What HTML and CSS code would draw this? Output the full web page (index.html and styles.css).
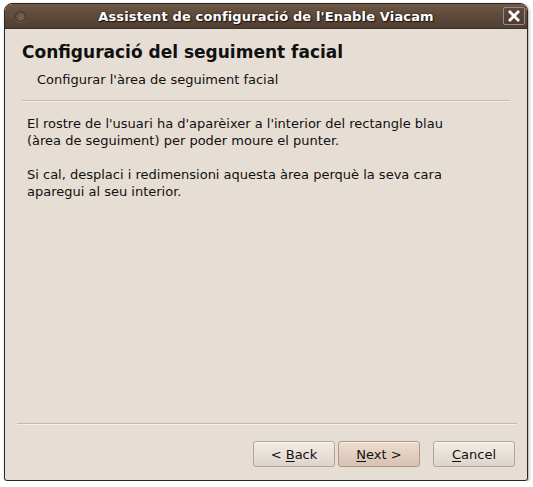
FILE: index.html
```html
<!DOCTYPE html>
<html>
<head>
<meta charset="utf-8">
<link rel="stylesheet" href="styles.css">
</head>
<body>
<div class="window">
  <div class="titlebar">
    <div class="tb-left"><span class="menu-dot"></span></div>
    <div class="title">Assistent de configuració de l'Enable Viacam</div>
    <div class="tb-right">
      <span class="close-btn">
        <svg width="12" height="12" viewBox="0 0 12 12"><path d="M2 2 L10 10 M10 2 L2 10" stroke="#fff" stroke-width="2.8" stroke-linecap="square"/></svg>
      </span>
    </div>
  </div>
  <div class="content">
    <div class="header">
      <div class="h-title">Configuració del seguiment facial</div>
      <div class="h-sub">Configurar l'àrea de seguiment facial</div>
    </div>
    <div class="sep top-sep"></div>
    <div class="body">
      <p>El rostre de l'usuari ha d'aparèixer a l'interior del rectangle blau<br>(àrea de seguiment) per poder moure el punter.</p>
      <p>Si cal, desplaci i redimensioni aquesta àrea perquè la seva cara<br>aparegui al seu interior.</p>
    </div>
    <div class="sep bottom-sep"></div>
    <div class="buttons">
      <button class="btn">&lt; <u>B</u>ack</button>
      <button class="btn btn-default"><u>N</u>ext &gt;</button>
      <button class="btn btn-cancel"><u>C</u>ancel</button>
    </div>
  </div>
</div>
</body>
</html>
```
FILE: styles.css
```css
html, body {
  margin: 0;
  padding: 0;
  background: #ffffff;
}
body {
  font-family: "DejaVu Sans", "Liberation Sans", sans-serif;
  color: #101010;
}
.window {
  margin: 3px 0 0 4px;
  width: 524px;
  height: 478px;
  box-sizing: border-box;
  border: 1px solid #2e2520;
  border-radius: 8px 8px 3px 3px;
  background: #e6ddd4;
  box-shadow: 1px 1px 3px rgba(0,0,0,0.35);
  display: flex;
  flex-direction: column;
  overflow: hidden;
}
.titlebar {
  height: 24px;
  flex: none;
  background: linear-gradient(#6e5847, #5a4738 60%, #4f3e32);
  display: grid;
  grid-template-columns: 1fr auto 1fr;
  align-items: center;
  border-bottom: 1px solid #3d3027;
}
.tb-left {
  display: flex;
  padding-left: 10px;
}
.menu-dot {
  width: 9px;
  height: 9px;
  border-radius: 50%;
  border: 1px solid #3e3128;
  background: radial-gradient(circle at 60% 65%, #7a6555, #5b483a);
  box-shadow: 0 1px 0 rgba(255,255,255,0.15);
}
.title {
  color: #ffffff;
  font-weight: bold;
  font-size: 13px;
  text-shadow: 1px 1px 1px #1c140f, 0 0 2px #2a1f18;
  letter-spacing: 0.15px;
  white-space: nowrap;
}
.tb-right {
  display: flex;
  justify-content: flex-end;
  padding-right: 2px;
}
.close-btn {
  width: 20px;
  height: 16px;
  border: 1px solid #9b8a7d;
  border-radius: 2px;
  background: linear-gradient(#5d4a3c, #4d3d31);
  display: flex;
  align-items: center;
  justify-content: center;
}
.content {
  flex: 1;
  display: flex;
  flex-direction: column;
}
.header {
  padding: 13px 17px 0 17px;
}
.h-title {
  font-weight: bold;
  font-size: 17px;
  line-height: 20px;
}
.h-sub {
  font-size: 13px;
  line-height: 16px;
  padding: 10px 0 0 15px;
}
.sep {
  height: 0;
  border-top: 1px solid #c9b8a8;
  border-bottom: 1px solid #f4efea;
}
.top-sep {
  margin: 12px 17px 0 17px;
}
.body {
  flex: 1;
  padding: 13px 22px 0 22px;
  font-size: 13px;
  line-height: 17px;
}
.body p {
  margin: 0 0 17px 0;
}
.bottom-sep {
  margin: 0 10px 0 12px;
}
.buttons {
  display: flex;
  justify-content: flex-end;
  padding: 16px 12px 13px 0;
}
.btn {
  width: 82px;
  height: 26px;
  margin: 0 0 0 3px;
  padding: 0;
  font-family: "DejaVu Sans", "Liberation Sans", sans-serif;
  font-size: 13px;
  color: #101010;
  border: 1px solid #b2a497;
  border-radius: 3px;
  background: linear-gradient(#f1ece6, #e8e1d9 50%, #ddd4ca);
  box-shadow: inset 0 1px 0 rgba(255,255,255,0.6);
}
.btn-default {
  background: linear-gradient(#ecdcd0, #e2cfc1 50%, #d8c2b2);
  border-color: #ad9888;
}
.btn-cancel {
  margin-left: 13px;
}
.btn u {
  text-decoration-thickness: 1px;
  text-underline-offset: 2px;
}
```
